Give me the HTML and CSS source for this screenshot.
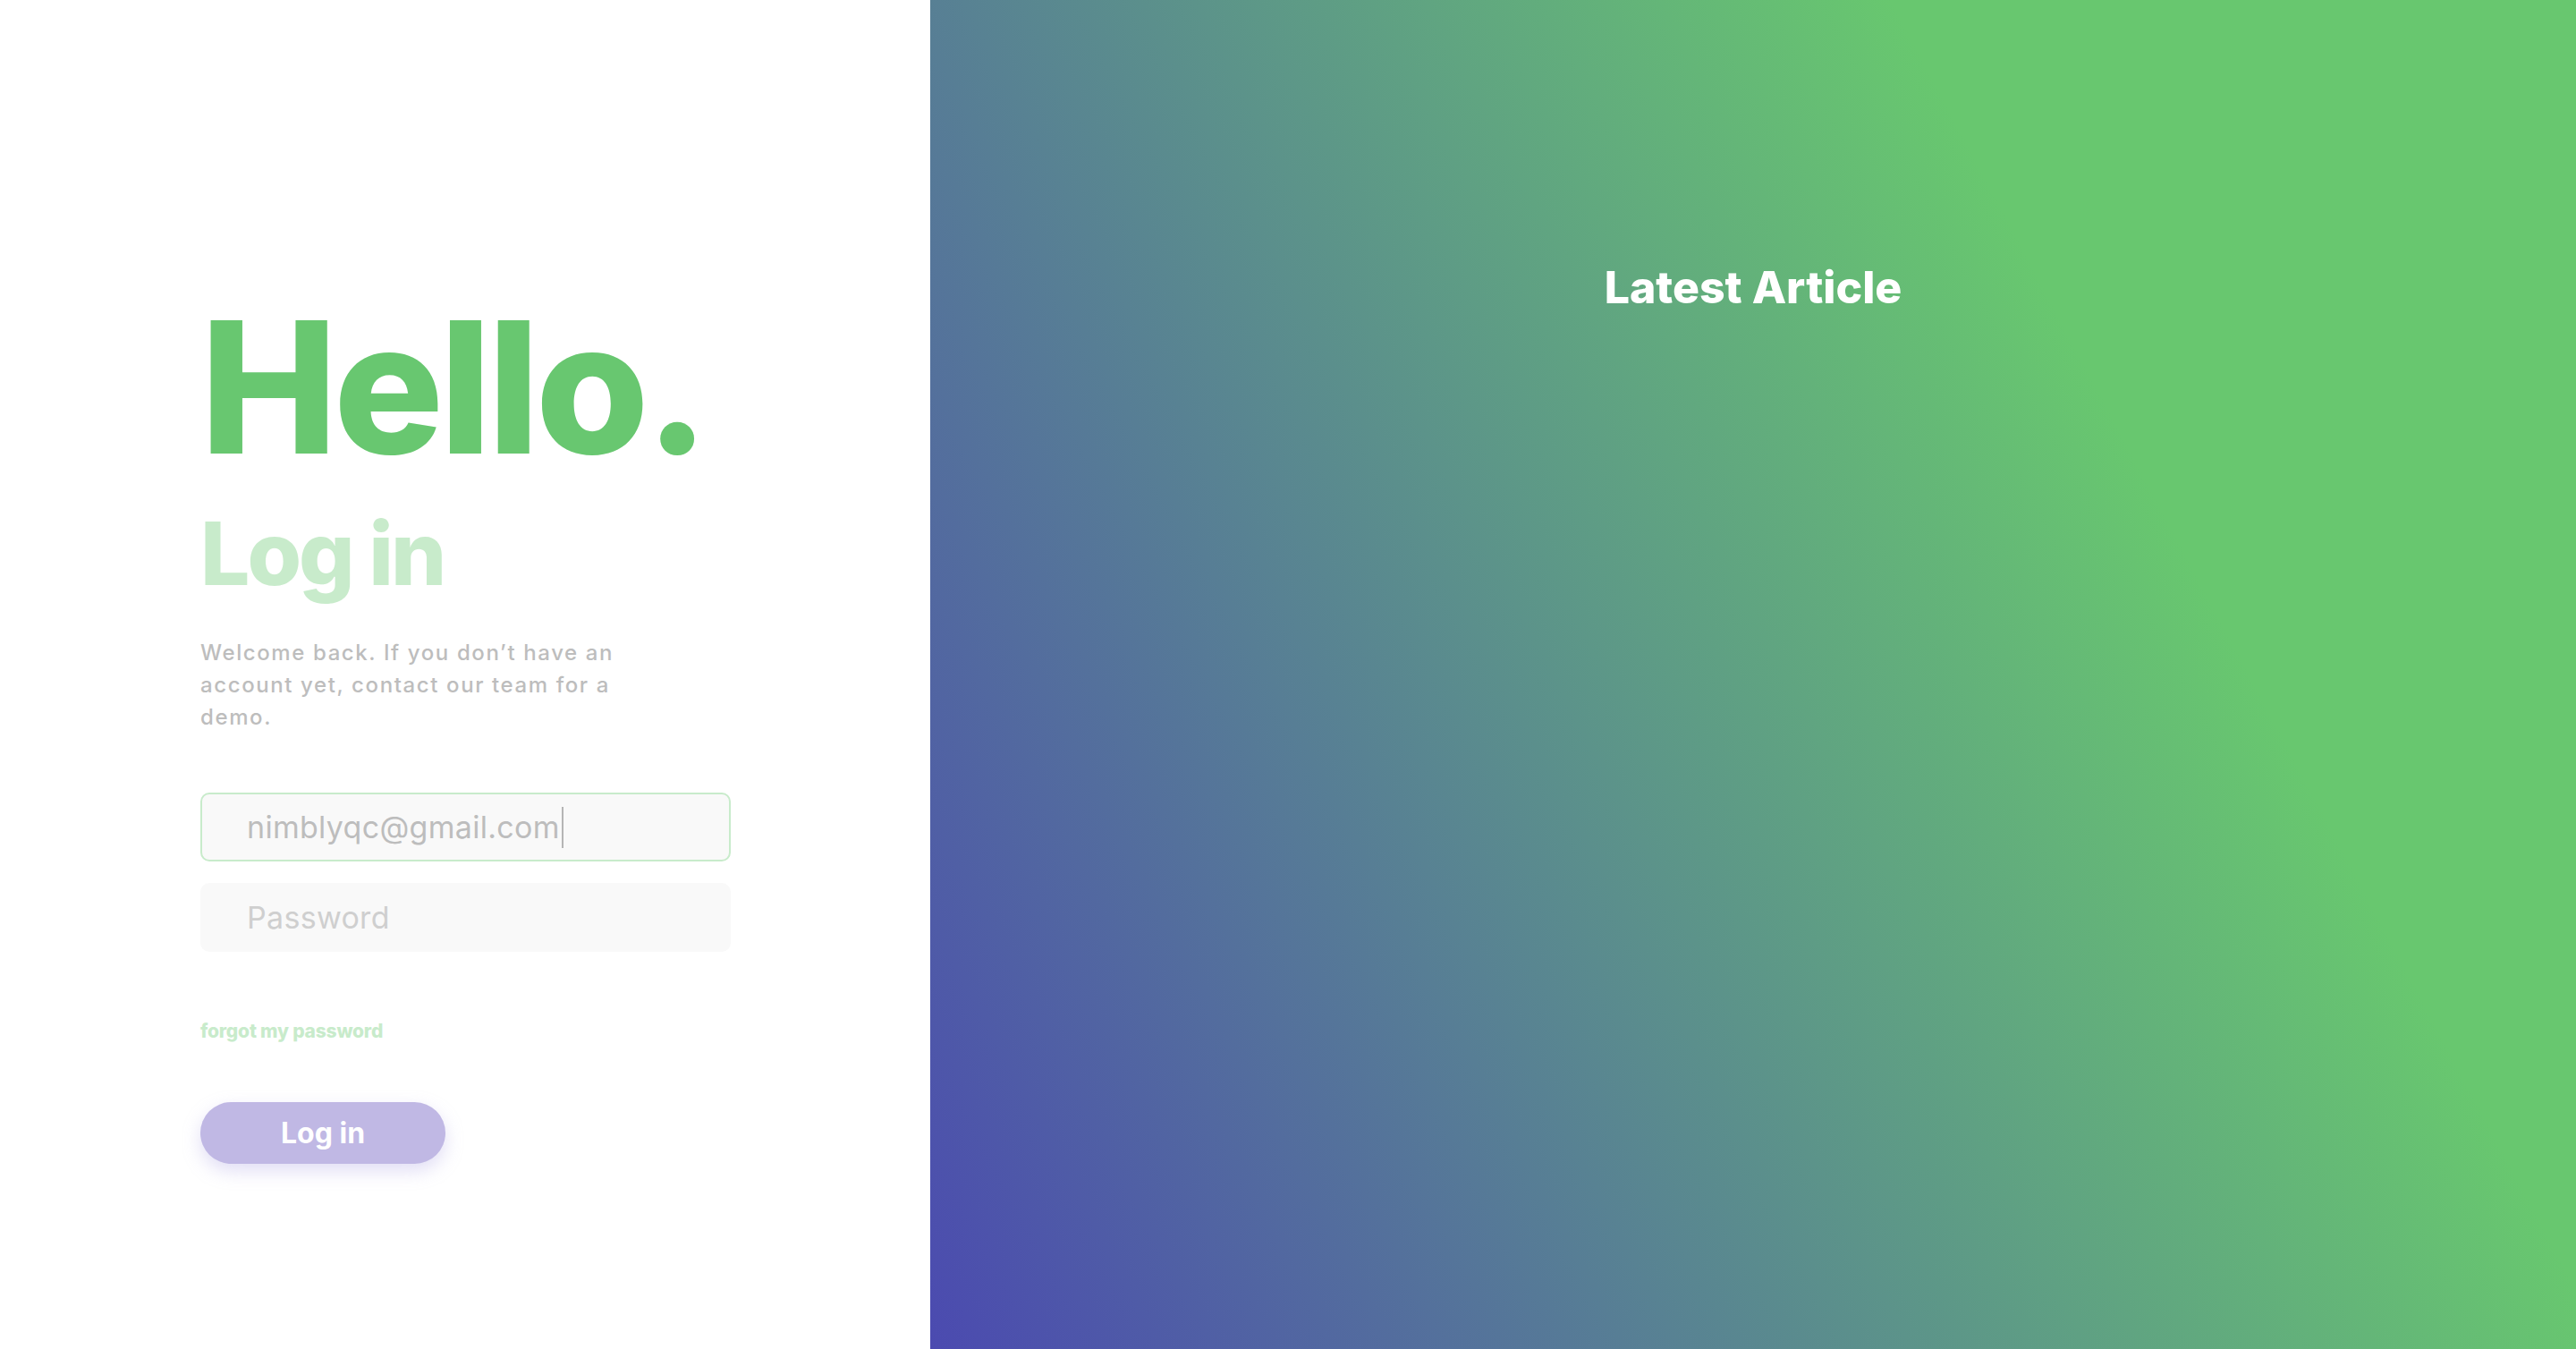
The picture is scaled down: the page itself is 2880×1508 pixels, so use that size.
FILE: index.html
```html
<!DOCTYPE html>
<html lang="en">
<head>
<meta charset="utf-8">
<title>Log in</title>
<link rel="stylesheet" href="styles.css">
</head>
<body>
<div class="page">
  <section class="login">
    <h1 class="hello">Hello.</h1>
    <h2 class="title">Log in</h2>
    <p class="intro">Welcome back. If you don’t have an account yet, contact our team for a demo.</p>
    <div class="field field-active"><span class="value">nimblyqc@gmail.com</span><span class="caret"></span></div>
    <div class="field"><span class="placeholder">Password</span></div>
    <a class="forgot" href="#">forgot my password</a>
    <button class="btn" type="button">Log in</button>
  </section>
  <section class="aside">
    <h3 class="aside-title">Latest Article</h3>
  </section>
</div>
</body>
</html>
```
FILE: styles.css
```css
* { box-sizing: border-box; }
html, body { margin: 0; padding: 0; }
body { font-family: Inter, "Noto Sans", sans-serif; background: #fff; }
.page { display: flex; width: 2880px; height: 1508px; }
.login {
  width: 1040px;
  flex: none;
  padding: 330px 0 0 224px;
  display: flex;
  flex-direction: column;
  align-items: flex-start;
}
.hello {
  margin: 0;
  font-size: 205px;
  line-height: 1;
  font-weight: 800;
  color: #68c770;
  letter-spacing: -4.5px;
}
.title {
  margin: 35px 0 0;
  font-size: 98px;
  line-height: 1;
  font-weight: 800;
  color: #c8ebcb;
  letter-spacing: -3px;
}
.intro {
  margin: 44px 0 0;
  width: 520px;
  font-size: 24px;
  line-height: 36px;
  color: #bdbdbd;
  letter-spacing: 1.6px;
  font-weight: 500;
}
.field {
  width: 593px;
  height: 77px;
  margin-top: 24px;
  border-radius: 10px;
  background: #f9f9f9;
  border: 2px solid transparent;
  padding-left: 50px;
  display: flex;
  align-items: center;
  font-size: 34px;
  letter-spacing: 0.3px;
  color: #bdbdbd;
}
.field-active { margin-top: 66px; border-color: #c8ebcb; }
.placeholder { color: #cfcfcf; }
.caret { width: 2px; height: 46px; background: #b5b5b5; margin-left: 2px; }
.forgot {
  margin-top: 77px;
  font-size: 21px;
  line-height: 24px;
  font-weight: 800;
  color: #c8ebcb;
  text-decoration: none;
  letter-spacing: -0.2px;
}
.btn {
  margin-top: 67px;
  width: 274px;
  height: 69px;
  border: 0;
  border-radius: 35px;
  background: #c0b8e4;
  color: #fff;
  font-family: inherit;
  font-size: 32px;
  font-weight: 700;
  box-shadow: 0 8px 20px rgba(170, 160, 225, 0.35);
}
.aside {
  flex: 1;
  background: linear-gradient(62deg, #4b4ab0 0%, #68c76f 71%, #68c76f 100%);
  display: flex;
  flex-direction: column;
  align-items: center;
  padding-top: 291px;
}
.aside-title {
  margin: 0;
  font-size: 50px;
  line-height: 1.2;
  font-weight: 800;
  color: #fff;
}
```
